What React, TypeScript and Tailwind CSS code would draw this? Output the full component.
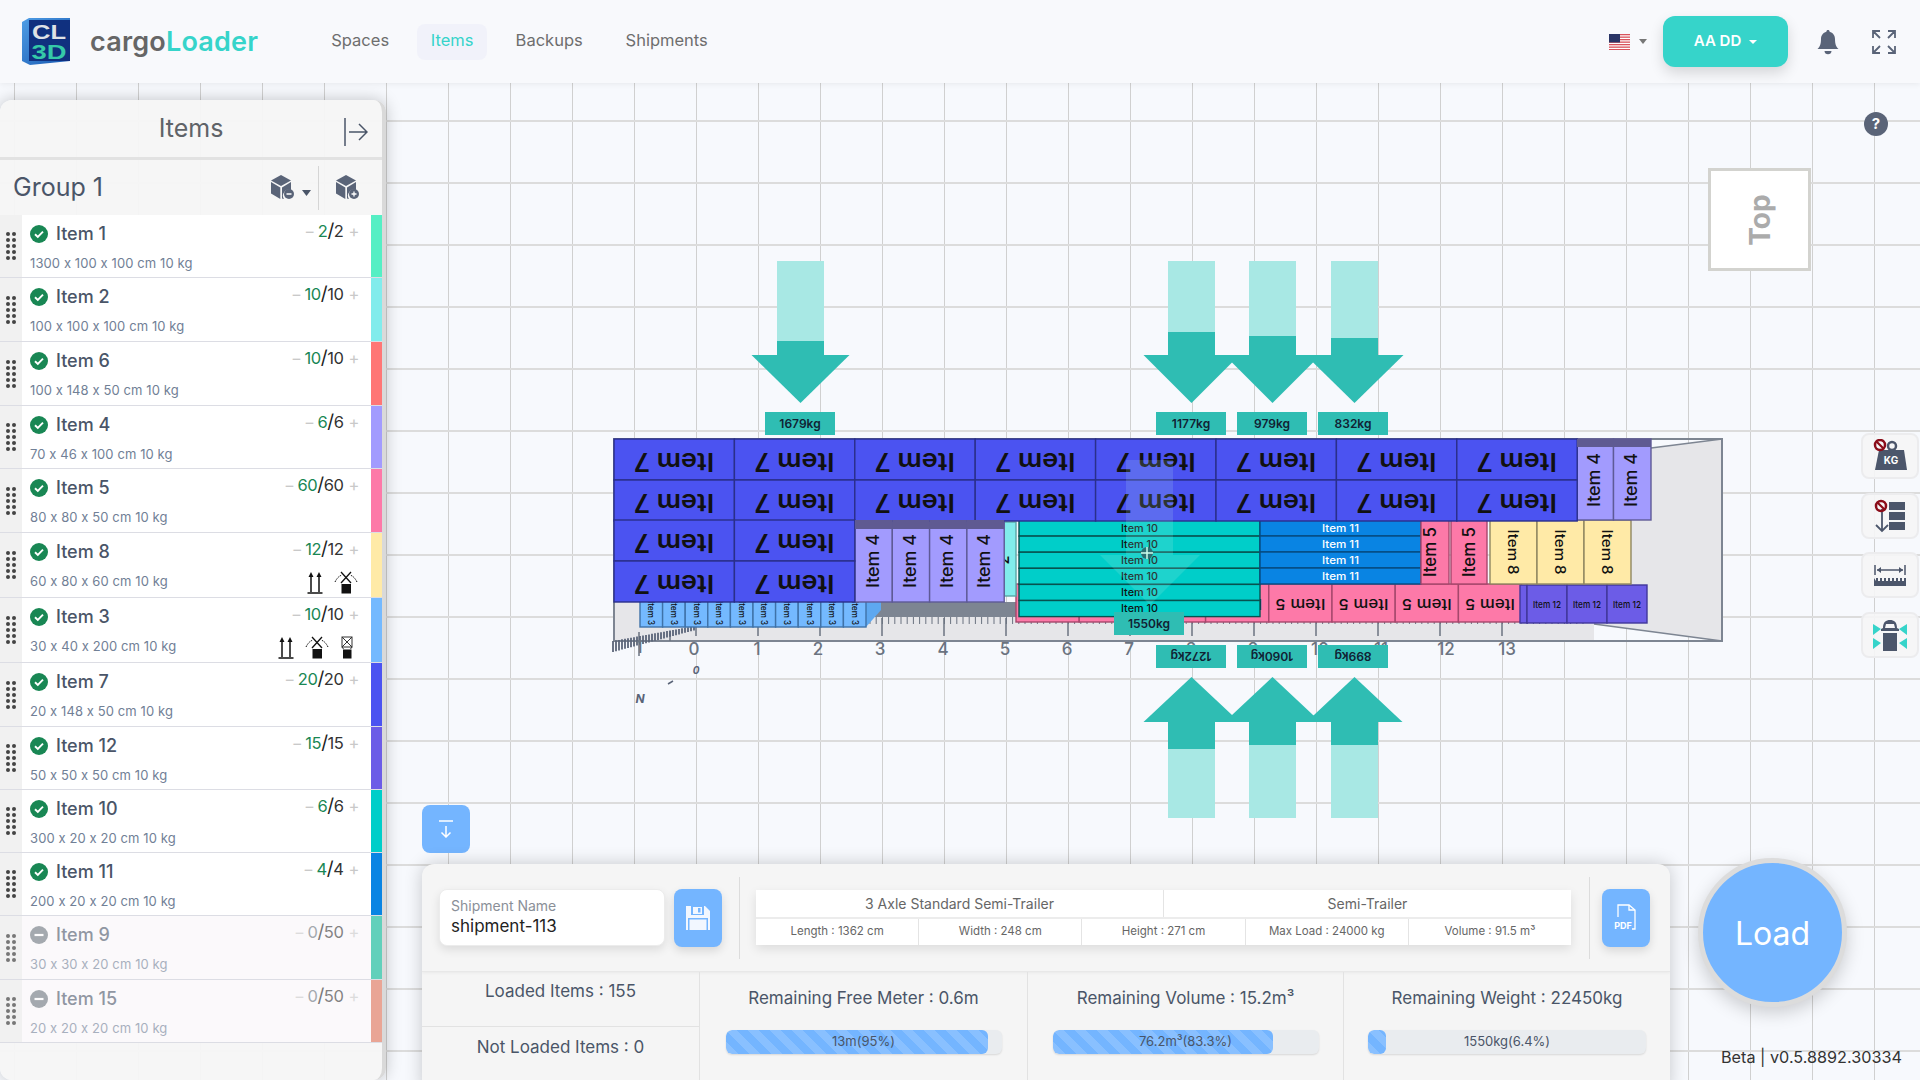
import type { ReactNode } from "react";

interface Item {
  name: string;
  size: string;
  loaded: number;
  total: number;
  color: string;
  height: number;
  marks?: number;
  off?: boolean;
}

const items: Item[] = [
  { name: "Item 1", size: "1300 x 100 x 100 cm 10 kg", loaded: 2, total: 2, color: "#55efc4", height: 63 },
  { name: "Item 2", size: "100 x 100 x 100 cm 10 kg", loaded: 10, total: 10, color: "#81ecec", height: 64 },
  { name: "Item 6", size: "100 x 148 x 50 cm 10 kg", loaded: 10, total: 10, color: "#ff7675", height: 64 },
  { name: "Item 4", size: "70 x 46 x 100 cm 10 kg", loaded: 6, total: 6, color: "#a29bfe", height: 63 },
  { name: "Item 5", size: "80 x 80 x 50 cm 10 kg", loaded: 60, total: 60, color: "#fd79a8", height: 64 },
  { name: "Item 8", size: "60 x 80 x 60 cm 10 kg", loaded: 12, total: 12, color: "#ffeaa7", height: 65, marks: 2 },
  { name: "Item 3", size: "30 x 40 x 200 cm 10 kg", loaded: 10, total: 10, color: "#74b9ff", height: 65, marks: 3 },
  { name: "Item 7", size: "20 x 148 x 50 cm 10 kg", loaded: 20, total: 20, color: "#4b53f1", height: 64 },
  { name: "Item 12", size: "50 x 50 x 50 cm 10 kg", loaded: 15, total: 15, color: "#6c5ce7", height: 63 },
  { name: "Item 10", size: "300 x 20 x 20 cm 10 kg", loaded: 6, total: 6, color: "#00cec9", height: 63 },
  { name: "Item 11", size: "200 x 20 x 20 cm 10 kg", loaded: 4, total: 4, color: "#0984e3", height: 63 },
  { name: "Item 9", size: "30 x 30 x 20 cm 10 kg", loaded: 0, total: 50, color: "#00b894", height: 64, off: true },
  { name: "Item 15", size: "20 x 20 x 20 cm 10 kg", loaded: 0, total: 50, color: "#e17055", height: 63, off: true },
];

const UpMark = () => (
  <svg width="16" height="23" viewBox="0 0 16 23" fill="none" stroke="#111" strokeWidth="1.5">
    <path d="M4 21V4M12 21V4M0.5 22h15" />
    <path d="M4 1l2.5 5h-5zM12 1l2.5 5h-5z" fill="#111" stroke="none" />
  </svg>
);

const TumbleMark = () => (
  <svg width="24" height="23" viewBox="0 0 24 23" fill="none" stroke="#111">
    <rect x="7.5" y="13" width="9.5" height="9.5" fill="#111" stroke="none" />
    <path d="M7 1l10 11M17 1L7 12" strokeWidth="1.3" />
    <path d="M1 11C3 7 5 5 8 4M23 11C21 7 19 5 16 4" strokeWidth="1" strokeDasharray="1.5 1" />
  </svg>
);

const StackMark = () => (
  <svg width="14" height="23" viewBox="0 0 14 23" fill="none" stroke="#333">
    <rect x="2" y="1" width="10" height="10" strokeWidth="1" />
    <path d="M2 1l10 10M12 1L2 11" strokeWidth="1" />
    <path d="M2 11l1.500 2M12 11l-1.500 2" strokeWidth="1" />
    <rect x="3" y="13.5" width="8.5" height="9" fill="#111" stroke="none" />
  </svg>
);

const Grip = ({ faded }: { faded?: boolean }) => (
  <div className="w-[22px] shrink-0 bg-[#f1f1f1] flex items-center justify-center">
    <div className={"grid grid-cols-2 gap-x-[2px] gap-y-[2px] " + (faded ? "opacity-70" : "")}>
      {Array.from({ length: 10 }).map((_, i) => (
        <span key={i} className="w-[4px] h-[4px] rounded-full bg-[#444]" />
      ))}
    </div>
  </div>
);

const ItemRow = ({ item }: { item: Item }) => (
  <div className="flex border-b border-[#dcdde4]" style={{ height: item.height }}>
    <Grip faded={item.off} />
    <div className={"flex-1 min-w-0 pl-[8px] pr-[12px] " + (item.off ? "bg-[#fbf9fb]" : "bg-white")}>
      <div className={"flex items-start h-[36px] pt-[10px] " + (item.off ? "opacity-60" : "")}>
        <svg width="18" height="18" viewBox="0 0 18 18" className="shrink-0">
          <circle cx="9" cy="9" r="9" fill={item.off ? "#6c757d" : "#198754"} />
          {item.off ? (
            <path d="M4.5 9h9" stroke="#fff" strokeWidth="2.2" />
          ) : (
            <path d="M5 9.3l2.8 2.7L13 6.6" stroke="#fff" strokeWidth="1.9" fill="none" />
          )}
        </svg>
        <span className="ml-[8px] text-[18px] leading-[18px] font-medium text-[#4a5568]">{item.name}</span>
        <span className="ml-auto flex items-center text-[16.500px] leading-[12px] tracking-tight">
          <span className="text-[#c9c9c9] mr-[3px]">−</span>
          <span className={item.off ? "text-[#6c757d]" : "text-[#198754]"}>{item.loaded}</span>
          <span className="text-[#222] text-[19px]">/</span>
          <span className="text-[#333]">{item.total}</span>
          <span className="text-[#c9c9c9] ml-[5px]">+</span>
        </span>
      </div>
      <div className="flex items-center justify-between h-[26px]">
        <span className={"text-[13px] text-[#718096] tracking-[0.1px] " + (item.off ? "opacity-60" : "")}>{item.size}</span>
        {item.marks ? (
          <div className={item.marks > 2 ? "flex items-center gap-[11px] mr-[5px]" : "flex items-center gap-[11px] mr-[1px]"}>
            <UpMark />
            <TumbleMark />
            {item.marks > 2 && <StackMark />}
          </div>
        ) : null}
      </div>
    </div>
    <div className={"w-[11px] shrink-0 " + (item.off ? "opacity-60" : "")} style={{ backgroundColor: item.color }} />
  </div>
);

const CubeIcon = ({ plus }: { plus?: boolean }) => (
  <svg width="25" height="25" viewBox="0 0 25 25">
    <path d="M11 0l10 5.5-10 5.5L1 5.500z" fill="#5a6478" />
    <path d="M1 7l9.300 5.500V24L1 18.500z" fill="#5a6478" />
    <path d="M12 12.500L21 7v8a6 6 0 0 0-7 9l-2-0.500z" fill="#5a6478" />
    <circle cx="19" cy="19" r="5" fill="#5a6478" />
    <path d={plus ? "M16.500 19h5M19 16.500v5" : "M16.500 19h5"} stroke="#fff" strokeWidth="1.300" />
  </svg>
);

const Sidebar = () => (
  <aside className="absolute left-0 top-[17px] bottom-0 w-[386px] z-10 bg-[#f5f5f5]/95 border-r-4 border-[#d9d9d9] rounded-t-xl rounded-b-xl shadow-[0_0_16px_rgba(0,0,0,0.22)] overflow-hidden">
    <div className="relative h-[60px] flex items-center justify-center border-b-[3px] border-[#e2e2e2]">
      <h2 className="text-[25px] font-normal text-[#5f6368]">Items</h2>
      <svg width="24" height="30" viewBox="0 0 24 30" fill="none" stroke="#4a5568" strokeWidth="1.500" className="absolute left-[344px] top-[17px]">
        <path d="M1 1v28M5 15h18M15 7l8 8-8 8" />
      </svg>
    </div>
    <div className="h-[55px] flex items-center pl-[13px]">
      <span className="text-[25px] text-[#4a5568]">Group 1</span>
      <div className="ml-auto flex items-center h-[44px] pr-[22px]">
        <CubeIcon />
        <svg width="9" height="6" viewBox="0 0 9 6" className="ml-[7px] mt-[10px]"><path d="M0 0h9L4.500 6z" fill="#4a5568" /></svg>
        <div className="w-px h-[44px] bg-[#d5d5d5] ml-[7px] mr-[16px]" />
        <CubeIcon plus />
      </div>
    </div>
    {items.map((item) => (
      <ItemRow key={item.name} item={item} />
    ))}
  </aside>
);

const Flag = () => (
  <svg width="21" height="16" viewBox="0 0 21 16">
    <rect width="21" height="16" fill="#fff" />
    {[0, 2.500, 5, 7.500, 10, 12.500, 15].map((y) => (
      <rect key={y} y={y} width="21" height="1.300" fill="#d9535c" />
    ))}
    <rect width="11" height="8.500" fill="#2a3566" />
  </svg>
);

const Header = () => (
  <header className="relative z-20 h-[83px] shrink-0 bg-[#f8f9fc] flex items-center shadow-[0_1px_6px_rgba(0,0,0,0.07)]">
    <svg width="50" height="47" viewBox="0 0 50 47" className="ml-[22px]">
      <defs>
        <linearGradient id="lg" x1="0" y1="0" x2="1" y2="1">
          <stop offset="0" stopColor="#4f9ee6" />
          <stop offset="1" stopColor="#1756b0" />
        </linearGradient>
      </defs>
      <path d="M0 4l7-4h41v43l-40 4-8-4z" fill="url(#lg)" />
      <rect x="7" y="2" width="41" height="41" fill="#10307f" />
      <text x="27" y="21" textAnchor="middle" fontFamily="Liberation Sans" fontWeight="700" fontSize="21" fill="#dfe1e6" textLength="34" lengthAdjust="spacingAndGlyphs">CL</text>
      <text x="27" y="41" textAnchor="middle" fontFamily="Liberation Sans" fontWeight="700" fontSize="21" fill="#35c9a8" textLength="35" lengthAdjust="spacingAndGlyphs">3D</text>
    </svg>
    <div className="ml-[18px] text-[27px] font-semibold tracking-[0.2px] leading-none">
      <span className="text-[#666]">cargo</span>
      <span className="text-[#36d4ca]">Loader</span>
    </div>
    <nav className="flex items-center ml-[72px] text-[16.500px] text-[#6e6e6e]">
      <a className="w-[60px] text-center pb-[2px]">Spaces</a>
      <a className="ml-[27px] w-[70px] h-[36px] flex items-center justify-center rounded-lg bg-[#f1f2fa] text-[#36d4ca] pb-[2px]">Items</a>
      <a className="ml-[27px] w-[70px] text-center pb-[2px]">Backups</a>
      <a className="ml-[39px] w-[87px] text-center pb-[2px]">Shipments</a>
    </nav>
    <div className="ml-auto flex items-center">
      <Flag />
      <svg width="8" height="5" viewBox="0 0 8 5" className="ml-[9px]"><path d="M0 0h8L4 5z" fill="#777" /></svg>
      <button className="ml-[16px] w-[125px] h-[51px] rounded-xl bg-[#36d4ca] text-white text-[15px] font-semibold flex items-center justify-center gap-[8px] shadow-[0_6px_14px_rgba(0,0,0,0.14)]">
        AA DD
        <svg width="8" height="4" viewBox="0 0 8 4"><path d="M0 0h8L4 4z" fill="#fff" /></svg>
      </button>
      <svg width="22" height="26" viewBox="0 0 22 26" className="ml-[29px]">
        <path d="M11 1c1 0 1.600.7 1.600 1.700C16 3.600 18 6.500 18 10c0 6 1.500 8 3.500 10H.5C2.500 18 4 16 4 10c0-3.500 2-6.400 5.400-7.300C9.400 1.700 10 1 11 1z" fill="#5a6478" />
        <path d="M7.500 22h7c0 2-1.500 3.300-3.500 3.300S7.500 24 7.500 22z" fill="#5a6478" />
      </svg>
      <svg width="26" height="26" viewBox="0 0 26 26" fill="none" stroke="#5a6478" strokeWidth="1.800" className="ml-[32px] mr-[23px]">
        <path d="M2 9V2h7M2 2l7 7M17 2h7v7M24 2l-7 7M2 17v7h7M2 24l7-7M24 17v7h-7M24 24l-7-7" />
      </svg>
    </div>
  </header>
);

interface Cell {
  x: number;
  y: number;
  w: number;
  h: number;
  fill: string;
  stroke: string;
  label: string;
  rot: number;
  size: number;
  len: number;
  ink?: string;
  cy?: number;
  tx?: number;
  weight?: number;
}

const Box = ({ c }: { c: Cell }) => {
  const cx = c.tx ?? c.x + c.w / 2;
  const cy = c.cy ?? c.y + c.h / 2;
  return (
    <g>
      <rect x={c.x} y={c.y} width={c.w} height={c.h} fill={c.fill} stroke={c.stroke} strokeWidth="1.400" />
      <text
        x={cx}
        y={cy}
        textAnchor="middle"
        dominantBaseline="central"
        fontSize={c.size}
        fontWeight={c.weight ?? 500}
        fill={c.ink ?? "#111"}
        textLength={c.len}
        lengthAdjust="spacingAndGlyphs"
        transform={`rotate(${c.rot} ${cx} ${cy})`}
      >
        {c.label}
      </text>
    </g>
  );
};

const scene: Cell[] = [];
// item 3 along the floor
for (let i = 0; i < 10; i++)
  scene.push({ x: 640 + i * 22.6, y: 596, w: 22.6, h: 31, fill: "#74b9ff", stroke: "#3f72a8", label: "Item 3", rot: 90, size: 8.500, len: 24, cy: 613 });
// item 5 upside down row
for (let i = 0; i < 8; i++)
  scene.push({ x: 1016 + i * 63.200, y: 584, w: 63.200, h: 38, fill: "#fd79a8", stroke: "#a5476c", label: "Item 5", rot: 180, size: 15, len: 50, cy: 604 });
// item 12
scene.push({ x: 1520, y: 585, w: 7, h: 38, fill: "#6c5ce7", stroke: "#41379a", label: "", rot: 0, size: 9, len: 1 });
for (let i = 0; i < 3; i++)
  scene.push({ x: 1527 + i * 40, y: 585, w: 40, h: 38, fill: "#6c5ce7", stroke: "#41379a", label: "Item 12", rot: 0, size: 9.500, len: 28 });
// item 2 sliver, its label mostly behind item 4
scene.push({ x: 1004, y: 522, w: 12, h: 74, fill: "#81ecec", stroke: "#5aa6a6", label: "2", rot: -90, size: 16, len: 9, tx: 1003, cy: 560 });
// item 10 + 11
for (let i = 0; i < 6; i++)
  scene.push({ x: 1019, y: 520 + i * 16.100, w: 241, h: 16.100, fill: "#00cec9", stroke: "#07524f", label: "Item 10", rot: 0, size: 10.500, len: 37 });
for (let i = 0; i < 4; i++)
  scene.push({ x: 1260, y: 520 + i * 16, w: 161, h: 16, fill: "#0984e3", stroke: "#064a80", label: "Item 11", rot: 0, size: 10.500, len: 37, ink: "#fff" });
// item 5 upright
scene.push({ x: 1421, y: 520, w: 28, h: 64, fill: "#fd79a8", stroke: "#a5476c", label: "Item 5", rot: -90, size: 17, len: 50, tx: 1430, cy: 552 });
scene.push({ x: 1451, y: 520, w: 36, h: 64, fill: "#fd79a8", stroke: "#a5476c", label: "Item 5", rot: -90, size: 17, len: 50, cy: 552 });
// item 8
for (let i = 0; i < 3; i++)
  scene.push({ x: 1490 + i * 47, y: 520, w: 47, h: 64, fill: "#ffeaa7", stroke: "#8f8660", label: "Item 8", rot: 90, size: 14, len: 45 });
// item 4 with the darker top band
for (let i = 0; i < 4; i++)
  scene.push({ x: 855 + i * 37.300, y: 520, w: 37.300, h: 82, fill: "#a29bfe", stroke: "#5e5a96", label: "Item 4", rot: -90, size: 17, len: 54, cy: 561, tx: 855 + i * 37.300 + 17.500 });
scene.push({ x: 1577, y: 439, w: 36.500, h: 81, fill: "#a29bfe", stroke: "#5e5a96", label: "Item 4", rot: -90, size: 17, len: 54, cy: 480, tx: 1593.500 });
scene.push({ x: 1613.500, y: 439, w: 37.500, h: 81, fill: "#a29bfe", stroke: "#5e5a96", label: "Item 4", rot: -90, size: 17, len: 54, cy: 480, tx: 1630.500 });
// item 7 wall
[439, 480, 520, 561].forEach((y) => {
  const cols = y < 520 ? 8 : 2;
  for (let i = 0; i < cols; i++)
    scene.push({ x: 614 + i * 120.400, y, w: 120.400, h: 41, fill: "#4b53f1", stroke: "#2a2f8a", label: "Item 7", rot: 180, size: 25, len: 80, cy: y + 22.500, weight: 600 });
});

const Tag = ({ x, y, text, flip }: { x: number; y: number; text: string; flip?: boolean }) => (
  <g>
    <rect x={x} y={y} width="70" height="23" fill="#2fbdb3" />
    <text
      x={x + 35}
      y={y + 11.500}
      textAnchor="middle"
      dominantBaseline="central"
      fontSize="12"
      fontWeight="600"
      fill="#123"
      transform={flip ? `rotate(180 ${x + 35} ${y + 11.500})` : undefined}
    >
      {text}
    </text>
  </g>
);

const DownArrow = ({ x, w, hw, lightEnd }: { x: number; w: number; hw: number; lightEnd: number }) => (
  <g>
    <rect x={x - w / 2} y="261" width={w} height={lightEnd - 261} fill="#a8e8e4" />
    <rect x={x - w / 2} y={lightEnd} width={w} height={355 - lightEnd} fill="#2fbdb3" />
    <path d={`M${x - hw} 355h${hw * 2}L${x} 403z`} fill="#2fbdb3" />
  </g>
);

const UpArrow = ({ x, lightStart }: { x: number; lightStart: number }) => (
  <g>
    <rect x={x - 23.500} y={lightStart} width="47" height={818 - lightStart} fill="#a8e8e4" />
    <rect x={x - 23.500} y="722" width="47" height={lightStart - 722} fill="#2fbdb3" />
    <path d={`M${x - 48} 722h96L${x} 677z`} fill="#2fbdb3" />
  </g>
);

const TruckScene = () => (
  <svg
    width="1920"
    height="1080"
    viewBox="0 0 1920 1080"
    className="absolute left-0 top-[-83px]"
    fontFamily="Inter, sans-serif"
  >
    {/* container */}
    <path d="M1651 448L1722 439V641L1594 624z" fill="#e6e6e9" />
    <rect x="614" y="602" width="980" height="39" fill="#e6e6e9" />
    <rect x="614" y="439" width="1108" height="202" fill="none" stroke="#7d8592" strokeWidth="2" />
    <path d="M1651 448L1722 439M1594 624L1722 641" stroke="#7d8592" strokeWidth="1.500" fill="none" />
    <rect x="866" y="602" width="150" height="15" fill="#7d8592" />
    {/* ruler */}
    {Array.from({ length: 116 }).map((_, i) => (
      <path key={i} d={`M${870 + i * 6.200} 617v7`} stroke="#6b7380" strokeWidth="1" />
    ))}
    {Array.from({ length: 14 }).map((_, i) => (
      <path key={i} d={`M${696 + i * 62} ${i > 2 ? 618 : 627}V636`} stroke="#6b7380" strokeWidth="1.500" />
    ))}
    {[
      [0, 694], [1, 757], [2, 818], [3, 880], [4, 943], [5, 1005], [6, 1067], [7, 1129],
      [8, 1191], [9, 1253], [10, 1320], [11, 1381], [12, 1446], [13, 1507],
    ].map(([n, x]) => (
      <text key={n} x={x} y="649" textAnchor="middle" dominantBaseline="central" fontSize="17" fontWeight="500" fill="#6b7380">
        {n}
      </text>
    ))}
    <path d="M639 632v24M670 631v10" stroke="#6b7380" strokeWidth="1.500" />
    {Array.from({ length: 28 }).map((_, i) => {
      const x = 613 + i * 3;
      const top = 641 - i * 0.55;
      return <path key={i} d={`M${x} ${top}v${11 - i * 0.25}`} stroke="#5a6478" strokeWidth="1.800" />;
    })}
    <text x="639" y="647" textAnchor="middle" dominantBaseline="central" fontSize="17" fontWeight="500" fill="#6b7380">1</text>
    <text x="696" y="670" textAnchor="middle" dominantBaseline="central" fontSize="10" fontWeight="700" fontStyle="italic" fill="#5a6478">0</text>
    <path d="M668 684l5-3" stroke="#5a6478" strokeWidth="1.500" />
    <text x="640" y="698" textAnchor="middle" dominantBaseline="central" fontSize="12" fontWeight="700" fontStyle="italic" fill="#5a6478">N</text>

    <path d="M866 627l15-17v-8h-15z" fill="#5ea8f0" />
    {scene.map((c, i) => (
      <Box key={i} c={c} />
    ))}
    {[855, 892.300, 929.600, 966.900].map((x) => (
      <rect key={x} x={x} y="520" width="37.300" height="9" fill="#5f5a92" />
    ))}
    <rect x="1577" y="439" width="36.500" height="8" fill="#5f5a92" />
    <rect x="1613.500" y="439" width="37.500" height="8" fill="#5f5a92" />

    {/* ghost arrow over the load */}
    <path d="M1126 460h47v95h27l-50 50-50-50h26z" fill="#b9ece8" opacity="0.16" />
    <circle cx="1147" cy="553" r="6" fill="#2c6f73" />
    <path d="M1147 547v12M1141 553h12" stroke="#cfe" strokeWidth="1.500" />

    {/* axle load arrows */}
    <DownArrow x={800.500} w={47} hw={49} lightEnd={341} />
    <DownArrow x={1191.500} w={47} hw={48} lightEnd={332} />
    <DownArrow x={1272.500} w={47} hw={48} lightEnd={336} />
    <DownArrow x={1354.500} w={47} hw={49} lightEnd={338} />
    <UpArrow x={1191.500} lightStart={749} />
    <UpArrow x={1272.500} lightStart={745} />
    <UpArrow x={1354.500} lightStart={745} />
    <Tag x={765} y={412} text="1679kg" />
    <Tag x={1156} y={412} text="1177kg" />
    <Tag x={1237} y={412} text="979kg" />
    <Tag x={1318} y={412} text="832kg" />
    <Tag x={1156} y={645} text="1272kg" flip />
    <Tag x={1237} y={645} text="1060kg" flip />
    <Tag x={1318} y={645} text="899kg" flip />
    <Tag x={1114} y={612} text="1550kg" />
  </svg>
);

const ToolButton = ({ children }: { children: ReactNode }) => (
  <div className="w-[58px] h-[46px] rounded-lg bg-[#f5f5f6]/90 border-2 border-[#ececee] flex items-center justify-center">
    {children}
  </div>
);

const Ban = ({ x, y }: { x: number; y: number }) => (
  <g>
    <circle cx={x} cy={y} r="5" fill="none" stroke="#8b0d1a" strokeWidth="2.500" />
    <path d={`M${x - 3.500} ${y - 3.500}l7 7`} stroke="#8b0d1a" strokeWidth="2.200" />
  </g>
);

const Toolbar = () => (
  <div className="absolute right-[1px] top-[350px] flex flex-col gap-[13.500px]">
    <ToolButton>
      <svg width="34" height="34" viewBox="0 0 34 34">
        <circle cx="19" cy="7" r="4" fill="none" stroke="#4c566b" strokeWidth="2.500" />
        <path d="M6 11h25l3 20H2z" fill="#4c566b" />
        <text x="18" y="25" textAnchor="middle" fontSize="10" fontWeight="700" fill="#fff" fontFamily="Inter, sans-serif">KG</text>
        <Ban x={7} y={6} />
      </svg>
    </ToolButton>
    <ToolButton>
      <svg width="34" height="34" viewBox="0 0 34 34">
        <path d="M9 10v22M3 26l6 6 6-6" fill="none" stroke="#4c566b" strokeWidth="1.800" />
        <rect x="16" y="3" width="16" height="8" fill="#4c566b" />
        <rect x="16" y="13" width="16" height="8" fill="#4c566b" />
        <rect x="16" y="23" width="16" height="8" fill="#4c566b" />
        <Ban x={8} y={7} />
      </svg>
    </ToolButton>
    <ToolButton>
      <svg width="32" height="22" viewBox="0 0 32 22">
        <path d="M1 1v10M31 1v10M3 6h26" stroke="#4c566b" strokeWidth="1.500" fill="none" />
        <path d="M3 6l4-3v6zM29 6l-4-3v6z" fill="#4c566b" />
        <path d="M0 14v8h32v-8h-2v3h-2v-3h-2v3h-2v-3h-2v3h-2v-3h-2v3h-2v-3h-2v3h-2v-3h-2v3H8v-3H6v3H4v-3H2v3z" fill="#4c566b" />
      </svg>
    </ToolButton>
    <ToolButton>
      <svg width="34" height="34" viewBox="0 0 34 34">
        <path d="M10 10c0-6 3-8 7-8s7 2 7 8l2 1v2H8v-2z" fill="#4c566b" />
        <path d="M13 6h8l1 4H12z" fill="#f5f5f6" />
        <rect x="10" y="15" width="14" height="18" fill="#4c566b" />
        <path d="M0 6l8 5-8 6zM34 6l-8 5 8 6zM0 20l8 5-8 6zM34 20l-8 5 8 6z" fill="#36d4ca" />
      </svg>
    </ToolButton>
  </div>
);

const Meter = ({ title, label, pct, barClass }: { title: string; label: string; pct: number; barClass: string }) => (
  <div className="border-l border-[#e2e2e2] flex flex-col items-center pt-[14px]">
    <div className="text-[17px] text-[#4a5568] h-[26px]">{title}</div>
    <div className={"relative mt-[18px] h-[24px] rounded-md bg-[#e9ecef] shadow-[0_1px_2px_rgba(0,0,0,0.12)] overflow-hidden " + barClass}>
      <div
        className="h-full rounded-md bg-[#74b5ff] bg-[linear-gradient(45deg,rgba(255,255,255,0.15)_25%,transparent_25%,transparent_50%,rgba(255,255,255,0.15)_50%,rgba(255,255,255,0.15)_75%,transparent_75%,transparent)] bg-[size:22px_22px]"
        style={{ width: `${pct}%` }}
      />
      <span className="absolute inset-0 flex items-center justify-center text-[13px] text-[#4a5568]">{label}</span>
    </div>
  </div>
);

const SpecCell = ({ children }: { children: string }) => (
  <div className="flex-1 flex items-center justify-center border-l first:border-l-0 border-[#e4e4e4] text-[11.500px] text-[#666]">
    {children}
  </div>
);

const BottomPanel = () => (
  <section className="absolute left-[422px] top-[781px] w-[1248px] h-[230px] z-10 bg-[#f5f5f5] rounded-xl shadow-[0_0_18px_rgba(0,0,0,0.2)] overflow-hidden">
    <div className="h-[108px] flex items-center pl-[17px] border-b border-[#e8e8e8] shadow-[0_1px_3px_rgba(0,0,0,0.05)]">
      <div className="w-[226px] h-[57px] bg-white rounded-lg border border-[#ececec] shadow-[0_4px_10px_rgba(0,0,0,0.1)] px-[11px] pt-[7px]">
        <div className="text-[14px] leading-[17px] text-[#8a8f98]">Shipment Name</div>
        <div className="text-[17px] leading-[24px] text-[#222]">shipment-113</div>
      </div>
      <button className="ml-[9px] w-[48px] h-[58px] rounded-lg bg-[#74b5ff] flex items-center justify-center shadow-[0_4px_10px_rgba(0,0,0,0.12)]">
        <svg width="26" height="26" viewBox="0 0 26 26">
          <path d="M1 1h19l5 5v19H1z" fill="#f2f7ff" />
          <rect x="6" y="1" width="13" height="9" fill="#74b5ff" />
          <rect x="8" y="2" width="9" height="7" fill="#f2f7ff" />
          <rect x="13" y="3" width="2.500" height="4.500" fill="#74b5ff" />
          <rect x="3" y="13" width="20" height="12" fill="#74b5ff" />
          <rect x="4.500" y="14.500" width="17" height="10.500" fill="#f2f7ff" />
        </svg>
      </button>
      <div className="ml-[17px] w-px h-[82px] bg-[#dcdcdc]" />
      <div className="ml-[16px] w-[815px] h-[55px] flex flex-col bg-white shadow-[0_4px_10px_rgba(0,0,0,0.1)]">
        <div className="h-[29px] flex border-b-2 border-[#ececec]">
          <div className="flex-1 flex items-center justify-center text-[14px] text-[#666] border-r border-[#e4e4e4]">3 Axle Standard Semi-Trailer</div>
          <div className="flex-1 flex items-center justify-center text-[14px] text-[#666]">Semi-Trailer</div>
        </div>
        <div className="flex-1 flex">
          <SpecCell>Length : 1362 cm</SpecCell>
          <SpecCell>Width : 248 cm</SpecCell>
          <SpecCell>Height : 271 cm</SpecCell>
          <SpecCell>Max Load : 24000 kg</SpecCell>
          <SpecCell>Volume : 91.5 m³</SpecCell>
        </div>
      </div>
      <div className="ml-[18px] w-px h-[82px] bg-[#dcdcdc]" />
      <button className="ml-[12px] w-[48px] h-[58px] rounded-lg bg-[#74b5ff] flex items-center justify-center shadow-[0_4px_10px_rgba(0,0,0,0.12)]">
        <svg width="24" height="28" viewBox="0 0 24 28" fill="none">
          <path d="M4 13V1h11l6 5v19h-3" stroke="#fff" strokeWidth="1.300" />
          <path d="M15 1v5h6" stroke="#fff" strokeWidth="1.300" />
          <text x="9" y="25" textAnchor="middle" fontSize="9" fontWeight="700" fill="#fff" fontFamily="Inter, sans-serif">PDF</text>
        </svg>
      </button>
    </div>
    <div className="grid grid-cols-[277px_328px_316px_327px] h-[122px]">
      <div className="flex flex-col text-[17px] text-[#4a5568]">
        <div className="h-[54px] flex items-center justify-center pb-[14px]">Loaded Items : 155</div>
        <div className="h-[42px] flex items-center justify-center border-t border-[#e2e2e2]">Not Loaded Items : 0</div>
      </div>
      <Meter title="Remaining Free Meter : 0.6m" label="13m(95%)" pct={95} barClass="w-[276px]" />
      <Meter title="Remaining Volume : 15.2m³" label="76.2m³(83.3%)" pct={83} barClass="w-[266px]" />
      <Meter title="Remaining Weight : 22450kg" label="1550kg(6.4%)" pct={6.4} barClass="w-[278px]" />
    </div>
  </section>
);

export default function App() {
  return (
    <div className="relative w-[1920px] h-[1080px] overflow-hidden flex flex-col bg-[#f8f9fc] font-['Inter',sans-serif]">
      <Header />
      <main className="relative flex-1 bg-[#f7f9fd] bg-[linear-gradient(#dcdcdc_2px,transparent_2px),linear-gradient(90deg,#d0d0d0_1.5px,transparent_1.5px)] bg-[size:62px_62px] bg-[position:14px_37px]">
        <TruckScene />
        <Sidebar />
        <div className="absolute left-[1864px] top-[29px] w-[24px] h-[24px] rounded-full bg-[#5a6478] flex items-center justify-center text-white text-[15px] font-bold">?</div>
        <div className="absolute left-[1708px] top-[85px] w-[103px] h-[103px] bg-white border-[3px] border-[#d3d3cf] flex items-center justify-center">
          <span className="-rotate-90 text-[28px] font-bold text-[#ababab]">Top</span>
        </div>
        <Toolbar />
        <button className="absolute left-[422px] top-[722px] w-[48px] h-[48px] rounded-lg bg-[#74b5ff] flex items-center justify-center">
          <svg width="16" height="18" viewBox="0 0 16 18" fill="none" stroke="#fff" strokeWidth="1.500">
            <path d="M1 1h14M8 6v11M3.500 12.500L8 17l4.500-4.500" />
          </svg>
        </button>
        <BottomPanel />
        <button className="absolute left-[1698px] top-[775px] w-[149px] h-[149px] rounded-full bg-[#74b5ff] border-[5px] border-[#dcdcdc] text-white text-[32px] pt-[2px] shadow-[0_6px_18px_rgba(0,0,0,0.18)]">
          Load
        </button>
        <div className="absolute left-[1721px] top-[963px] text-[16.200px] leading-[22px] text-[#333]">Beta | v0.5.8892.30334</div>
      </main>
    </div>
  );
}
